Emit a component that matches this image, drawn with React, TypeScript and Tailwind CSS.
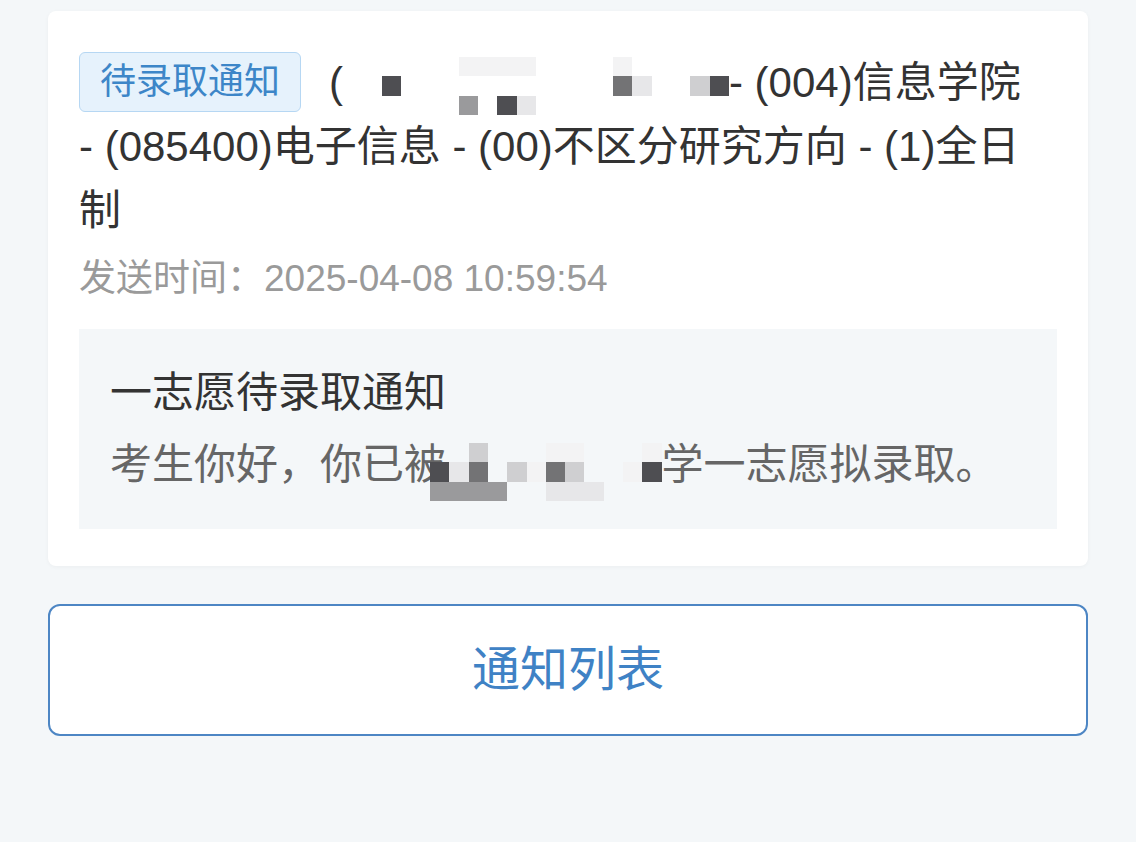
import React from 'react';

// mosaic cell colours, one letter per cell
const cellClass: Record<string, string> = {
  '.': 'bg-transparent',
  w: 'bg-[#f4f7f9]',
  f: 'bg-[#f3f3f4]',
  l: 'bg-[#e7e7e9]',
  k: 'bg-[#cfcfd1]',
  g: 'bg-[#9a9a9c]',
  m: 'bg-[#737375]',
  d: 'bg-[#4e4e52]',
};

const titleMosaic = [
  '......ffff....f.....',
  '..d...........ml..kd',
  '......g.dl..........',
];

const bodyMosaic = [
  '..k...ff...f',
  'dlmwkfmkwwfd',
  'ggggwwlllwww',
];

function Mosaic({ rows, className }: { rows: string[]; className?: string }) {
  return (
    <span className={`inline-flex flex-col relative ${className ?? ''}`}>
      {rows.map((row, i) => (
        <span key={i} className="flex">
          {row.split('').map((c, j) => (
            <span key={j} className={`block w-[19.3px] h-[19.3px] ${cellClass[c]}`} />
          ))}
        </span>
      ))}
    </span>
  );
}

export default function App() {
  return (
    <div className="min-h-screen bg-[#f4f7f9] px-[48px] pt-[11px] font-['Liberation_Sans','Noto_Sans_CJK_SC',sans-serif]">
      <div className="bg-white rounded-[8px] shadow-[0_1px_4px_rgba(0,0,0,0.04)] pt-[40px] pl-[31px] pr-[31px] pb-[37px]">
        <p className="text-[42px] leading-[64px] text-[#333333] pr-[24px]">
          <span className="inline-block align-middle -mt-[8px] mr-[28px] px-[20px] leading-[58px] text-[36px] text-[#3d86c8] bg-[#e6f2fc] border border-[#b6d7f3] rounded-[6px]">
            待录取通知
          </span>
          (
          <Mosaic rows={titleMosaic} className="align-top top-[6px]" />
          - (004)信息学院 - (085400)电子信息 - (00)不区分研究方向 - (1)全日制
        </p>
        <div className="mt-[11px] text-[37px] leading-[50px] text-[#9a9a9a]">
          发送时间：2025-04-08 10:59:54
        </div>
        <div className="mt-[25px] bg-[#f4f7f9] px-[31px] py-[33px]">
          <div className="text-[42px] leading-[62px] text-[#333333]">一志愿待录取通知</div>
          <div className="mt-[10px] text-[42px] leading-[62px] text-[#666666] whitespace-nowrap">
            考生你好，你已被
            <Mosaic rows={bodyMosaic} className="align-top top-[9px] -ml-[16px]" />
            学一志愿拟录取。
          </div>
        </div>
      </div>
      <button className="mt-[38px] w-full h-[132px] bg-white border-2 border-[#4d86c4] rounded-[12px] text-[48px] text-[#3f82c5]">
        通知列表
      </button>
    </div>
  );
}
